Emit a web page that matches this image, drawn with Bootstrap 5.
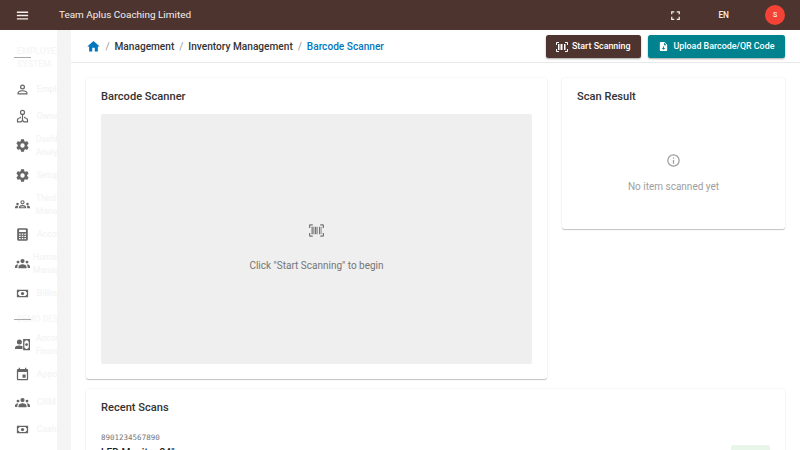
<!DOCTYPE html>
<html lang="en">
<head>
<meta charset="utf-8">
<meta name="viewport" content="width=device-width, initial-scale=1">
<title>Barcode Scanner</title>
<link href="https://cdn.jsdelivr.net/npm/bootstrap@5.3.0/dist/css/bootstrap.min.css" rel="stylesheet">
<style>
html,body{height:100%;overflow:hidden}
body{font:400 10px/15px Roboto,sans-serif;color:#373737;background:#fff}
svg{display:block;flex:none;fill:currentColor}
.topbar{height:30px;background:#4e342e;color:#f4efee;padding:0 15px}
.brand{font-size:9.95px;margin-left:29px;margin-top:-1px}
.lang{margin:0 36px 0 35.5px;font-size:8.3px;font-weight:500}
.avatar-s{width:20px;height:20px;background:#f44336;font-size:7px;font-weight:500}
.shell{height:420px;overflow:hidden}
.side{width:57px;background:#fff;color:#666;overflow:hidden;flex:none}
.rail{width:14px;background:#f4f4f4;flex:none}
.side-head{height:45.5px;padding:15px 0 0 17px;position:relative;color:#f6f6f6;font-size:8.8px;line-height:13px;font-weight:500}
.side-head::after,.side-sub::after{content:"";position:absolute;left:14px;width:17px;height:1px;background:#aaa}
.side-head::after{top:27px}
.side-sub{height:22px;position:relative;padding-left:17px;color:#f6f6f6;font-size:8.5px;font-weight:500;line-height:25px;white-space:nowrap}
.side-sub::after{top:12px}
.item{height:27px;padding-left:14.7px;line-height:13px;font-size:8.8px;font-weight:500}
.item.two{height:32px}
.item svg{width:15px;height:15px}
.item span{color:#f4f4f4;margin-left:7px;white-space:nowrap}
.item.two span{margin-left:6px}
.item.two span.wide{margin-left:3px}
.crumbs{height:33px;border-bottom:1px solid #e9e9e9;padding:0 15px 0 14.5px}
.crumbs .trail{font-size:10.15px;font-weight:500;color:#333;white-space:nowrap}
.trail i{font-style:normal;font-weight:400;color:#999;margin:0 4.8px 0 5px}
.now{color:#0277bd}
.act{height:23px;border-radius:2.5px;font-size:8.9px;line-height:15px;font-weight:500;box-shadow:0 1px 2px rgba(0,0,0,.35);border:0;padding:1px 10px 0;white-space:nowrap}
.brown,.brown:hover{width:95px;background:#4e342e;color:#fff}
.teal,.teal:hover{width:137.5px;background:#00838f;color:#fff}
.panel{background:#fff;border-radius:2.5px;box-shadow:0 1px 1px rgba(0,0,0,.22),0 0 2px rgba(0,0,0,.10);padding:11px 15px 15px}
.panel h2{font-size:11.1px;line-height:15px;font-weight:500;margin:0 0 10px;color:#333}
.main-p{width:461px;height:301px}
.res-p{width:223px;height:151px}
.view{height:250px;border-radius:2px;background:#efefef;color:#757575;padding-top:18px}
.mutedt{color:#9e9e9e;padding-top:39px}
.code{font:400 7.5px/10px "DejaVu Sans Mono",monospace;color:#757575;margin-top:8px}
.prod{font-size:10.2px;font-weight:500;line-height:15px;margin-top:2px;color:#222}
.chip{width:39px;height:15px;margin-bottom:.5px;border-radius:2px;background:#e8f5e9}
</style>
<script src="https://cdn.jsdelivr.net/npm/bootstrap@5.3.0/dist/js/bootstrap.bundle.min.js"></script>
</head>
<body>
<svg width="0" height="0" class="position-absolute"><defs>
<symbol id="user" viewBox="0 0 24 24"><path d="M12 4a4 4 0 1 1 0 8a4 4 0 0 1 0-8m0 2a2 2 0 1 0 0 4a2 2 0 0 0 0-4m0 7c2.670 0 8 1.330 8 4v3H4v-3c0-2.670 5.330-4 8-4m0 1.900c-2.970 0-6.100 1.460-6.100 2.100v1.100h12.200V17c0-.64-3.130-2.100-6.100-2.100z"/></symbol>
<symbol id="tie" viewBox="0 0 24 24"><g fill="none" stroke="currentColor" stroke-width="1.9"><circle cx="12" cy="5.500" r="3.200"/><path d="M12 9v10M8.500 12.500V14C5.500 14.500 4 16 4 17.500v3h5.500l2.500-2 2.500 2H20v-3c0-1.500-1.500-3-4.500-3.500v-1.500"/></g></symbol>
<symbol id="cog" viewBox="0 0 24 24"><path d="M12,15.5A3.5,3.5 0 0,1 8.5,12A3.5,3.5 0 0,1 12,8.5A3.5,3.5 0 0,1 15.5,12A3.5,3.5 0 0,1 12,15.5M19.43,12.97C19.47,12.65 19.5,12.33 19.5,12C19.5,11.67 19.47,11.34 19.43,11L21.54,9.37C21.73,9.22 21.78,8.95 21.66,8.73L19.66,5.27C19.54,5.05 19.27,4.96 19.05,5.05L16.56,6.05C16.04,5.66 15.5,5.32 14.87,5.07L14.5,2.42C14.46,2.18 14.25,2 14,2H10C9.75,2 9.54,2.18 9.5,2.42L9.13,5.07C8.5,5.32 7.96,5.66 7.44,6.05L4.95,5.05C4.73,4.96 4.46,5.05 4.34,5.27L2.34,8.73C2.21,8.95 2.27,9.22 2.46,9.37L4.57,11C4.53,11.34 4.5,11.67 4.5,12C4.5,12.33 4.53,12.65 4.57,12.97L2.46,14.63C2.27,14.78 2.21,15.05 2.34,15.27L4.34,18.73C4.46,18.95 4.73,19.03 4.95,18.95L7.44,17.94C7.96,18.34 8.5,18.68 9.13,18.93L9.5,21.58C9.54,21.82 9.75,22 10,22H14C14.25,22 14.46,21.82 14.5,21.58L14.87,18.93C15.5,18.67 16.04,18.34 16.56,17.94L19.05,18.95C19.27,19.03 19.54,18.95 19.66,18.73L21.66,15.27C21.78,15.05 21.73,14.78 21.54,14.63L19.43,12.97Z"/></symbol>
<symbol id="groupso" viewBox="0 0 24 24"><path d="M4 13a2 2 0 1 0 0-4a2 2 0 0 0 0 4m1.130 1.100C2.500 13.700 0 14.600 0 16.430V18h4.500v-1.610c0-.83.23-1.610.63-2.290M20 13a2 2 0 1 0 0-4a2 2 0 0 0 0 4m4 3.430c0-1.830-2.500-2.730-5.130-2.330.4.68.63 1.460.63 2.290V18H24z"/><g fill="none" stroke="currentColor" stroke-width="1.8"><circle cx="12" cy="8.500" r="2.500"/><path d="M7 17.100c0-4.500 10-4.500 10 0z"/></g></symbol>
<symbol id="people" viewBox="0 0 24 24"><circle cx="12" cy="8" r="3.400"/><path d="M5.500 19.500v-2c0-5.500 13-5.500 13 0v2z"/><circle cx="4.800" cy="9.700" r="2.300"/><circle cx="19.200" cy="9.700" r="2.300"/><path d="M0 19v-2c0-2.500 2.500-3.500 5.300-3.300C4 15 3.700 16.500 3.700 19zM24 19v-2c0-2.500-2.500-3.500-5.300-3.300 1.300 1.300 1.600 2.800 1.600 5.300z"/></symbol>
<symbol id="calc" viewBox="0 0 24 24"><path fill-rule="evenodd" d="M6 2h12q2.500 0 2.500 2v16q0 2-2.500 2H6q-2.500 0-2.500-2V4q0-2 2.500-2m.5 2.500v3.500h11V4.500zM6.500 10.500v2h2.500v-2zm4.300 0v2h2.500v-2zm4.200 0v2h2.500v-2zM6.500 14v2h2.500v-2zm4.300 0v2h2.500v-2zm4.200 0v2h2.500v-2zM6.500 17.500v2h2.500v-2zm4.300 0v2h2.500v-2zm4.200 0v2h2.500v-2z"/></symbol>
<symbol id="cash" viewBox="0 0 24 24"><path fill-rule="evenodd" d="M3 6h18v12H3zM7 8q0 2-2 2v4q2 0 2 2h10q0-2 2-2v-4q-2 0-2-2z"/><circle cx="12" cy="12" r="2.600"/></symbol>
<symbol id="usercash" viewBox="0 0 24 24"><circle cx="7" cy="8" r="4"/><path d="M0 19v-2c0-3.500 7-4.500 12-2.300V19z"/><path fill-rule="evenodd" d="M13 3h11v18H13zM17 5q0 2-2 2v10q2 0 2 2h3q0-2 2-2V7q-2 0-2-2z"/><circle cx="18.500" cy="12" r="2.200"/></symbol>
<symbol id="cal" viewBox="0 0 24 24"><path d="M17 12h-5v5h5v-5zM16 1v2H8V1H6v2H5c-1.110 0-1.990.9-1.990 2L3 19c0 1.100.89 2 2 2h14c1.100 0 2-.9 2-2V5c0-1.100-.9-2-2-2h-1V1h-2zm3 18H5V8h14v11z"/></symbol>
<symbol id="scan" viewBox="0 0 24 24"><path d="M4 6h2v12H4zm3 0h1v12H7zm2 0h3v12H9zm4 0h1v12h-1zm3 0h2v12h-2zm3 0h1v12h-1zM2 4v4H0V4a2 2 0 0 1 2-2h4v2zm20-2a2 2 0 0 1 2 2v4h-2V4h-4V2zM2 16v4h4v2H2a2 2 0 0 1-2-2v-4zm20 4v-4h2v4a2 2 0 0 1-2 2h-4v-2z"/></symbol>
</defs></svg>

<header class="topbar d-flex align-items-center">
  <svg width="15" height="15" viewBox="0 0 24 24"><path d="M3 5.500h18v2.300H3zm0 5.300h18v2.300H3zm0 5.400h18v2.300H3z"/></svg>
  <span class="brand">Team Aplus Coaching Limited</span>
  <svg class="ms-auto" width="15" height="15" viewBox="0 0 24 24"><path d="M5 5h5v2H7v3H5zm9 0h5v5h-2V7h-3zm3 9h2v5h-5v-2h3zm-7 3v2H5v-5h2v3z"/></svg>
  <span class="lang">EN</span>
  <span class="avatar-s rounded-circle d-flex align-items-center justify-content-center">S</span>
</header>

<div class="shell d-flex">
  <nav class="side">
    <div class="side-head">EMPLOYEE<br>SYSTEM</div>
    <div class="item d-flex align-items-center"><svg><use href="#user"/></svg><span>Employee</span></div>
    <div class="item d-flex align-items-center"><svg><use href="#tie"/></svg><span>Owner</span></div>
    <div class="item two d-flex align-items-center"><svg><use href="#cog"/></svg><span>Dashboard<br>Analytics</span></div>
    <div class="item d-flex align-items-center"><svg><use href="#cog"/></svg><span>Setup</span></div>
    <div class="item two d-flex align-items-center"><svg><use href="#groupso"/></svg><span>Third<br>Management</span></div>
    <div class="item d-flex align-items-center"><svg><use href="#calc"/></svg><span>Accounts</span></div>
    <div class="item two d-flex align-items-center"><svg><use href="#people"/></svg><span class="wide">Human<br>Management</span></div>
    <div class="item d-flex align-items-center"><svg><use href="#cash"/></svg><span>Billing</span></div>
    <div class="side-sub">DEMO DESK</div>
    <div class="item two d-flex align-items-center"><svg><use href="#usercash"/></svg><span>Accounts<br>Finance</span></div>
    <div class="item d-flex align-items-center"><svg><use href="#cal"/></svg><span>Appointment</span></div>
    <div class="item d-flex align-items-center" style="padding-top:2px"><svg><use href="#people"/></svg><span>CRM</span></div>
    <div class="item d-flex align-items-center" style="padding-top:2px"><svg><use href="#cash"/></svg><span>Cash</span></div>
  </nav>
  <div class="rail"></div>
  <main class="flex-grow-1">
    <div class="crumbs d-flex align-items-center">
      <svg class="now" width="15" height="15" viewBox="0 0 24 24"><path d="M10 20v-6h4v6h5v-8h3L12 3 2 12h3v8z"/></svg>
      <div class="trail"><i>/</i>Management<i>/</i>Inventory Management<i>/</i><span class="now">Barcode Scanner</span></div>
      <button class="act btn brown ms-auto d-flex align-items-center"><svg width="12" height="12" class="me-1"><use href="#scan"/></svg>Start Scanning</button>
      <button class="act btn teal d-flex align-items-center" style="margin-left:6.500px"><svg width="11" height="11" viewBox="0 0 24 24" style="margin-right:5px"><path fill-rule="evenodd" d="M6 2h8l6 6v12q0 2-2 2H6q-2 0-2-2V4q0-2 2-2m7 1.500V9h5.500zM11 12v3H8l4 4 4-4h-3v-3z"/></svg>Upload Barcode/QR Code</button>
    </div>
    <div class="d-flex" style="padding:15px 15px 0;gap:15px">
      <section class="panel main-p"><h2>Barcode Scanner</h2>
        <div class="view d-flex flex-column align-items-center justify-content-center">
          <svg width="15" height="15"><use href="#scan"/></svg>
          <div style="margin-top:20.500px">Click "Start Scanning" to begin</div>
        </div>
      </section>
      <section class="panel res-p"><h2>Scan Result</h2>
        <div class="mutedt d-flex flex-column align-items-center">
          <svg width="15" height="15" viewBox="0 0 24 24"><path d="M11 7h2v2h-2zm0 4h2v6h-2zM12 2a10 10 0 1 0 0 20a10 10 0 0 0 0-20m0 18a8 8 0 1 1 0-16a8 8 0 0 1 0 16"/></svg>
          <div style="margin-top:10.500px">No item scanned yet</div>
        </div>
      </section>
    </div>
    <section class="panel" style="margin:10px 15px 0;padding-bottom:0"><h2>Recent Scans</h2>
      <div class="d-flex justify-content-between align-items-end">
        <div><div class="code">8901234567890</div><div class="prod">LED Monitor 24"</div></div>
        <div class="chip"></div>
      </div>
    </section>
  </main>
</div>
</body>
</html>
